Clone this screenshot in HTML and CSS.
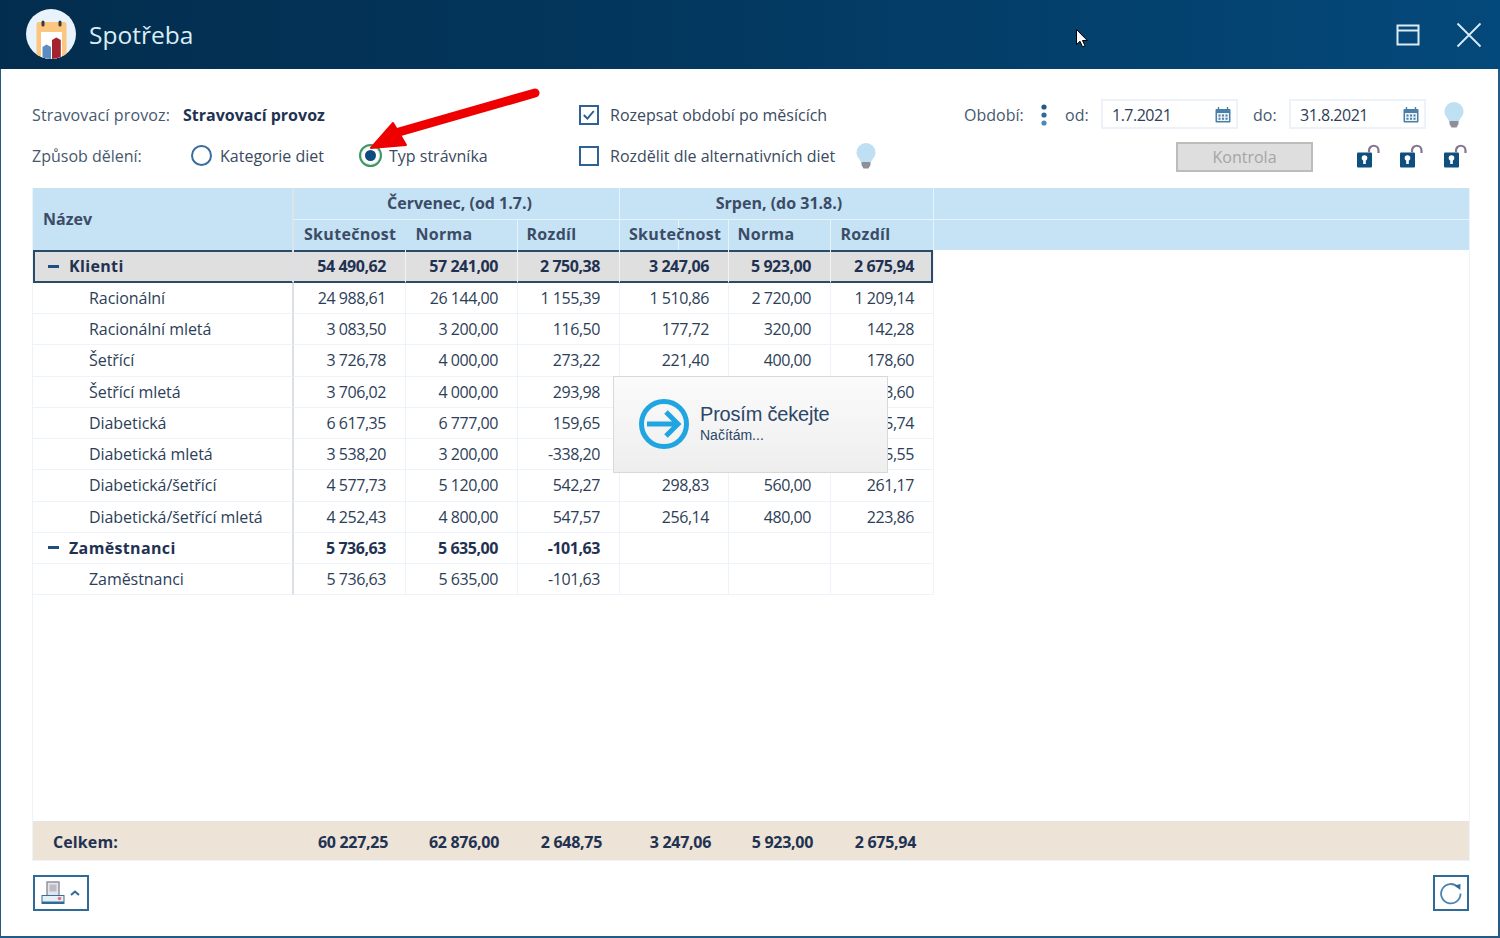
FILE: index.html
```html
<!DOCTYPE html>
<html lang="cs">
<head>
<meta charset="utf-8">
<title>Spotřeba</title>
<link rel="stylesheet" href="styles.css">
</head>
<body>
<div class="app">
  <header class="titlebar">
    <svg class="app-icon" viewBox="0 0 50 50" width="50" height="50">
      <defs><clipPath id="c"><circle cx="25" cy="25" r="25"/></clipPath></defs>
      <circle cx="25" cy="25" r="25" fill="#e9f3fb"/>
      <g clip-path="url(#c)">
        <rect x="10.500" y="13" width="30" height="37" rx="2" fill="#fbc67f"/>
        <rect x="15" y="23" width="21" height="27" fill="#fff"/>
        <rect x="15.500" y="11.500" width="3" height="6" rx="1.500" fill="#3a3a3a"/>
        <rect x="32.500" y="11.500" width="3" height="6" rx="1.500" fill="#3a3a3a"/>
        <path d="M16.500 38l4-2.500 4.500 2.500v12h-8.500z" fill="#5b8cc4"/>
        <path d="M26 31l4.300-2.500 4.500 2.500v19h-8.800z" fill="#a32331"/>
      </g>
    </svg>
    <span class="app-title">Spotřeba</span>
    <div class="win-controls">
      <svg viewBox="0 0 24 24" width="24" height="24"><path d="M1.500 2.500h21v19h-21zM1.500 7.500h21" fill="none" stroke="#dcebf4" stroke-width="2"/></svg>
      <svg viewBox="0 0 26 26" width="26" height="26"><path d="M1.500 1.500l23 23M24.500 1.500l-23 23" fill="none" stroke="#dcebf4" stroke-width="1.800"/></svg>
    </div>
  </header>

  <section class="toolbar">
    <div class="tool-row">
      <span class="lbl lbl-first">Stravovací provoz:</span>
      <strong class="val">Stravovací provoz</strong>
      <label class="check c1"><span class="box"><svg viewBox="0 0 20 20" width="18" height="18"><path d="M3.500 10l4.500 4.500 8-9.500" fill="none" stroke="#2b5a8a" stroke-width="2.400"/></svg></span>Rozepsat období po měsících</label>
      <span class="lbl lbl-period">Období:</span>
      <svg class="dots" viewBox="0 0 6 22" width="6" height="22"><circle cx="3" cy="3" r="2.600" fill="#1f5a8a"/><circle cx="3" cy="11" r="2.600" fill="#2f6a9a"/><circle cx="3" cy="19" r="2.600" fill="#4f88b4"/></svg>
      <span class="lbl lbl-od">od:</span>
      <div class="date"><span>1.7.2021</span><svg viewBox="0 0 16 16" width="16" height="16"><use href="#cal"/></svg></div>
      <span class="lbl lbl-do">do:</span>
      <div class="date"><span>31.8.2021</span><svg viewBox="0 0 16 16" width="16" height="16"><use href="#cal"/></svg></div>
      <svg class="bulb bulb-top" viewBox="0 0 20 28" width="20" height="28"><use href="#bulb"/></svg>
    </div>
    <div class="tool-row">
      <span class="lbl lbl-way">Způsob dělení:</span>
      <label class="radio r1"><span class="dot"></span>Kategorie diet</label>
      <label class="radio r2"><span class="dot on"></span>Typ strávníka</label>
      <label class="check c2"><span class="box"></span>Rozdělit dle alternativních diet</label>
      <svg class="bulb bulb-mid" viewBox="0 0 20 28" width="20" height="28"><use href="#bulb"/></svg>
      <button class="btn-check" type="button">Kontrola</button>
      <svg class="lock l1" viewBox="0 0 23 24" width="23" height="24"><use href="#lock"/></svg>
      <svg class="lock" viewBox="0 0 23 24" width="23" height="24"><use href="#lock"/></svg>
      <svg class="lock" viewBox="0 0 23 24" width="23" height="24"><use href="#lock"/></svg>
    </div>
  </section>

  <section class="grid">
    <div class="head">
      <div class="h-name">Název</div>
      <div class="h-months">
        <div class="h-m m1">Červenec, (od 1.7.)</div>
        <div class="h-m m2">Srpen, (do 31.8.)</div>
        <div class="h-fill"></div>
        <div class="h-c c1">Skutečnost</div><div class="h-c c2w">Norma</div><div class="h-c c3">Rozdíl</div>
        <div class="h-c c4">Skutečnost</div><div class="h-c c5">Norma</div><div class="h-c c6">Rozdíl</div>
        <div class="h-fill2"></div>
      </div>
    </div>
    <div class="body">
      <div class="row group sel"><div class="n"><i class="minus"></i>Klienti</div><div>54 490,62</div><div>57 241,00</div><div>2 750,38</div><div>3 247,06</div><div>5 923,00</div><div>2 675,94</div></div>
      <div class="row"><div class="n">Racionální</div><div>24 988,61</div><div>26 144,00</div><div>1 155,39</div><div>1 510,86</div><div>2 720,00</div><div>1 209,14</div></div>
      <div class="row"><div class="n">Racionální mletá</div><div>3 083,50</div><div>3 200,00</div><div>116,50</div><div>177,72</div><div>320,00</div><div>142,28</div></div>
      <div class="row"><div class="n">Šetřící</div><div>3 726,78</div><div>4 000,00</div><div>273,22</div><div>221,40</div><div>400,00</div><div>178,60</div></div>
      <div class="row"><div class="n">Šetřící mletá</div><div>3 706,02</div><div>4 000,00</div><div>293,98</div><div>226,40</div><div>400,00</div><div>173,60</div></div>
      <div class="row"><div class="n">Diabetická</div><div>6 617,35</div><div>6 777,00</div><div>159,65</div><div>364,26</div><div>760,00</div><div>395,74</div></div>
      <div class="row"><div class="n">Diabetická mletá</div><div>3 538,20</div><div>3 200,00</div><div>-338,20</div><div>134,45</div><div>320,00</div><div>185,55</div></div>
      <div class="row"><div class="n">Diabetická/šetřící</div><div>4 577,73</div><div>5 120,00</div><div>542,27</div><div>298,83</div><div>560,00</div><div>261,17</div></div>
      <div class="row"><div class="n">Diabetická/šetřící mletá</div><div>4 252,43</div><div>4 800,00</div><div>547,57</div><div>256,14</div><div>480,00</div><div>223,86</div></div>
      <div class="row group"><div class="n"><i class="minus"></i>Zaměstnanci</div><div>5 736,63</div><div>5 635,00</div><div>-101,63</div><div></div><div></div><div></div></div>
      <div class="row"><div class="n">Zaměstnanci</div><div>5 736,63</div><div>5 635,00</div><div>-101,63</div><div></div><div></div><div></div></div>
    </div>
    <div class="total"><div class="t-name">Celkem:</div><div>60 227,25</div><div>62 876,00</div><div>2 648,75</div><div>3 247,06</div><div>5 923,00</div><div>2 675,94</div></div>
  </section>

  <footer class="foot">
    <button class="icon-btn print" type="button">
      <svg viewBox="0 0 24 24" width="24" height="24"><rect x="6" y="1" width="12" height="14" fill="#e4e4ea" stroke="#8c8c9c" stroke-width="1.400"/><rect x="8.500" y="3.500" width="7" height="7" fill="#bcbcc6"/><rect x="1" y="14.500" width="22" height="8" fill="#e2f0f8" stroke="#3a6e99" stroke-width="1"/><rect x="1" y="20.500" width="22" height="2.500" fill="#2f6a99"/><circle cx="18.500" cy="17.500" r="1.800" fill="#ef6f78"/></svg>
      <svg viewBox="0 0 10 6" width="10" height="6"><path d="M1 5l4-3.500 4 3.500" fill="none" stroke="#2f6a99" stroke-width="2"/></svg>
    </button>
    <button class="icon-btn refresh" type="button">
      <svg viewBox="0 0 24 24" width="24" height="24"><path d="M19 6.200A9.700 9.700 0 1 0 21.500 12.500" fill="none" stroke="#4a82ae" stroke-width="1.800"/><path d="M15.500 4.500l6-1.500-.2 6z" fill="#2f6a99"/></svg>
    </button>
  </footer>

  <div class="loading">
    <svg viewBox="0 0 52 52" width="52" height="52"><circle cx="26" cy="26" r="22.500" fill="none" stroke="#1fa5e0" stroke-width="5"/><path d="M9 26h30M28 14l12 12-12 12" fill="none" stroke="#1fa5e0" stroke-width="5"/></svg>
    <div class="l-text"><div class="l-title">Prosím čekejte</div><div class="l-sub">Načítám...</div></div>
  </div>

  <svg class="red-arrow" viewBox="0 0 180 70" width="180" height="70"><path d="M175 6L32 47" stroke="#ef0000" stroke-width="9" stroke-linecap="round"/><path d="M11 61L33 36 46 58z" fill="#ef0000" stroke="#ef0000" stroke-width="2" stroke-linejoin="round"/></svg>
  <svg class="cursor" viewBox="0 0 12 19" width="12" height="19"><path d="M.5.500v15l3.500-3.200 2.500 5.500 2.500-1-2.500-5.300h4.800z" fill="#fff" stroke="#000" stroke-width="1"/></svg>
</div>

<svg class="defs" width="0" height="0">
  <defs>
    <symbol id="cal" viewBox="0 0 16 16"><rect x=".5" y="2" width="15" height="13.500" rx="1" fill="#4a7fa8"/><rect x="2" y="6" width="12" height="8" fill="#eaf1f7"/><path d="M3.500 0v3M12.500 0v3" stroke="#4a7fa8" stroke-width="1.400"/><path d="M3.500 7.500h2v2h-2zM7 7.500h2v2H7zM10.500 7.500h2v2h-2zM3.500 10.800h2v2h-2zM7 10.800h2v2H7zM10.500 10.800h2v2h-2z" fill="#4a7fa8"/></symbol>
    <symbol id="bulb" viewBox="0 0 20 28"><path d="M10 1a9.500 9.500 0 0 0-9.500 9.500c0 4 2.500 5.500 4 8.500l.5 1.500h10l.5-1.500c1.500-3 4-4.500 4-8.500A9.500 9.500 0 0 0 10 1z" fill="#bfe0f2"/><path d="M5.500 20h9v3l-2 3.500h-5l-2-3.500z" fill="#8f8f9c"/></symbol>
    <symbol id="lock" viewBox="0 0 23 24"><rect x="0" y="8.500" width="15" height="15" rx="1" fill="#0f4f7f"/><circle cx="7.500" cy="14" r="2.800" fill="#fff"/><rect x="6.200" y="15" width="2.600" height="5" fill="#fff"/><path d="M12 8.500V6.500a4.700 4.700 0 0 1 9.500 0V9" fill="none" stroke="#85758f" stroke-width="2.200"/></symbol>
  </defs>
</svg>
</body>
</html>
```
FILE: styles.css
```css
* { box-sizing: border-box; }
html, body { margin: 0; padding: 0; }
body { width: 1500px; height: 938px; overflow: hidden; background: #fff; font-family: "Open Sans", "Liberation Sans", sans-serif; font-size: 16px; color: #2d3e58; }
.defs { position: absolute; }
.app { position: relative; width: 1500px; height: 938px; display: flex; flex-direction: column; border: solid #245a84; border-width: 0 2px 2px 1px; background: #fff; }

.titlebar { flex: none; height: 69px; margin: 0 -2px 0 -1px; display: flex; align-items: center; padding: 0 0 0 26px; background: linear-gradient(90deg, #032d4e 0%, #03365c 40%, #04497b 100%); }
.app-icon { flex: none; margin-top: -1px; }
.app-title { margin: 1px 0 0 13px; font-size: 24.5px; color: #d9edf6; line-height: 1; }
.win-controls { margin-left: auto; display: flex; align-items: center; gap: 36px; padding-right: 18px; }

.toolbar { flex: none; padding: 25px 0 12px 31px; }
.tool-row { display: flex; align-items: center; height: 41px; }
.lbl { color: #46586f; }
.lbl-first { width: 151px; letter-spacing: .14px; }
.val { width: 396px; font-weight: 700; color: #1f3252; }
.check { display: flex; align-items: center; color: #3a4a62; }
.box { width: 20px; height: 20px; margin-right: 11px; border: 2px solid #2f6196; display: flex; align-items: center; justify-content: center; }
.c1 { width: 385px; }
.lbl-period { width: 77px; }
.dots { margin-right: 18px; }
.lbl-od { width: 36px; }
.lbl-do { width: 36px; margin-left: 15px; }
.date { width: 137px; height: 30px; margin-top: -1px; border: 2px solid #edf2fa; display: flex; align-items: center; justify-content: space-between; padding: 2px 5px 0 9px; color: #2d3e58; letter-spacing: -.5px; }
.bulb-top { margin-left: 18px; }
.lbl-way { width: 159px; }
.radio { display: flex; align-items: center; color: #3a4a62; }
.r1 { width: 168px; }
.r2 { width: 220px; }
.dot { width: 21px; height: 21px; margin-right: 8px; border-radius: 50%; border: 2px solid #3b6c9c; display: flex; align-items: center; justify-content: center; }
.dot.on { width: 23px; height: 23px; margin-right: 7px; border-color: #3f9468; box-shadow: inset 0 0 0 1px #d6ebe0; }
.dot.on::after { content: ""; width: 11px; height: 11px; border-radius: 50%; background: #0d4a80; }
.c2 { width: 277px; }
.bulb-mid { flex: none; }
.btn-check { width: 137px; height: 30px; margin: 2px 0 0 300px; border: 2px solid #bcbcbc; background: #dedede; color: #a5a5a5; font: inherit; padding: 0; }
.lock { margin: 1px 0 0 20.500px; }
.lock.l1 { margin-left: 43.500px; }

.grid { flex: 1; min-height: 0; margin: 0 28px 0 31px; display: flex; flex-direction: column; border: 1px solid #eef2fa; border-top: 0; }
.head { flex: none; display: flex; height: 62px; background: #c5e3f5; font-weight: 700; color: #3c4c66; }
.h-name { width: 261px; padding: 0 0 0 10px; display: flex; align-items: center; border-right: 2px solid #dde3e8; }
.h-months { flex: 1; display: grid; grid-template-columns: 112px 112px 102px 109px 102px 103px 1fr; grid-template-rows: 31.500px 30.500px; }
.h-m { display: flex; align-items: center; justify-content: center; border-right: 1px solid #e6f3fb; border-bottom: 1px solid #e6f3fb; }
.m1 { grid-column: 1 / 4; padding-left: 6px; }
.m2 { grid-column: 4 / 7; padding-left: 5px; }
.h-fill { border-bottom: 1px solid #e6f3fb; }
.h-c { display: flex; align-items: center; padding: 0 0 1px 10px; border-right: 1px solid #e6f3fb; letter-spacing: .3px; }
.c2w { padding-left: 9.500px; }
.c3 { padding-left: 8.500px; }
.c4 { padding-left: 9px; }
.c5 { padding-left: 8.500px; }
.c6 { padding-left: 9.500px; }

.body { flex: none; width: 900px; }
.row { display: grid; grid-template-columns: 261px 112px 112px 102px 109px 102px 103px; height: 31.25px; color: #2d3e58; }
.row > div { display: flex; align-items: center; justify-content: flex-end; padding-right: 19px; border-right: 1px solid #eef2fa; border-bottom: 1px solid #eef2fa; letter-spacing: -.45px; }
.row > .n { justify-content: flex-start; padding: 0 0 0 56px; border-right: 2px solid #dcdfe3; letter-spacing: -.06px; }
.group > div { font-weight: 700; color: #1f3252; }
.row.group > .n { padding-left: 15px; letter-spacing: .35px; }
.minus { width: 11px; height: 3px; margin-right: 10px; background: #1f4f80; }
.sel { height: 33px; background: #dfdfdf; box-shadow: inset 0 0 0 2px #2b4a68; margin-bottom: -.25px; }
.sel > div { border-bottom-color: transparent; border-right-color: #f2f2f2; }

.total { flex: none; margin-top: auto; height: 39px; display: grid; grid-template-columns: 261px 113px 111px 103px 109px 102px 103px; background: #ede3d6; border-top: 1px solid #e4e4e2; font-weight: 700; color: #1f3252; }
.total > div { display: flex; align-items: center; justify-content: flex-end; padding: 1px 19px 0 0; letter-spacing: -.3px; }
.total > .t-name { justify-content: flex-start; padding-left: 20px; letter-spacing: .1px; }

.foot { flex: none; height: 75px; margin: 0 29px 0 32px; padding-top: 14px; display: flex; justify-content: space-between; align-items: flex-start; }
.icon-btn { height: 36px; background: #fff; border: 2px solid #2f6a99; padding: 0; display: flex; align-items: center; justify-content: center; }
.print { width: 56px; gap: 5px; justify-content: flex-start; padding-left: 6px; }
.refresh { width: 36px; }

.loading { position: absolute; left: 612px; top: 376px; width: 275px; height: 97px; padding: 0 0 0 24px; display: flex; align-items: center; gap: 10px; background: linear-gradient(#fbfbfb, #eeeeee); border: 1px solid #d8d8d8; font-family: "Liberation Sans", Arial, sans-serif; color: #2c4666; }
.loading svg { margin-top: -2px; }
.l-text { margin-top: -4px; }
.l-title { font-size: 20px; line-height: 24px; letter-spacing: -.2px; }
.l-sub { font-size: 14px; line-height: 18px; }
.red-arrow { position: absolute; left: 359px; top: 87px; }
.cursor { position: absolute; left: 1075px; top: 29px; }
```
